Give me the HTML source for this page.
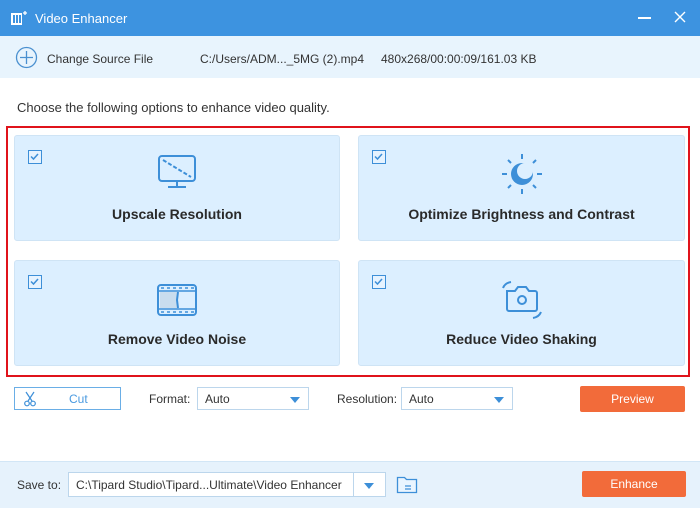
<!DOCTYPE html>
<html><head><meta charset="utf-8"><style>
*{margin:0;padding:0;box-sizing:border-box}
body{width:700px;height:508px;overflow:hidden;background:#fff;font-family:"Liberation Sans","DejaVu Sans",sans-serif;position:relative;color:#333}
.abs{position:absolute}
.title{left:0;top:0;width:700px;height:36px;background:#3d93e0;color:#fff;font-size:13px}
.src{left:0;top:36px;width:700px;height:42px;background:#e8f4fd;font-size:12px;color:#333}
.card{background:#dcefff;border-radius:3px;border:1px solid #cfe4f5}
.card .lbl{position:absolute;left:0;right:0;top:70px;text-align:center;font-weight:bold;font-size:14px;color:#2a2a2a}
.cb{position:absolute;left:13px;top:14px;width:14px;height:14px;border:1.5px solid #3d8fd8;background:#e6f3ff}
.ic{position:absolute;left:50%;top:18px;transform:translateX(-50%)}
.sel{border:1px solid #bcd6ec;background:#fff;height:23px;font-size:12px;padding:4px 7px;color:#333}
.tri{position:absolute;right:8px;top:9px;width:0;height:0;border-left:5px solid transparent;border-right:5px solid transparent;border-top:6px solid #3d8fd8}
.btn{background:#f26b3a;color:#fff;font-size:12px;text-align:center;border-radius:2px}
</style></head><body>
<div class="abs title">
  <svg class="abs" style="left:10px;top:10px" width="18" height="16" viewBox="0 0 18 16"><rect x="1" y="3" width="11" height="12" fill="#fff"/><rect x="3" y="5" width="2" height="8" fill="#3d93e0"/><rect x="6" y="5" width="2" height="8" fill="#3d93e0"/><rect x="9" y="5" width="2" height="8" fill="#3d93e0"/><path d="M15 1v4M13 3h4" stroke="#fff" stroke-width="1.3"/></svg>
  <span class="abs" style="left:35px;top:11px">Video Enhancer</span>
  <div class="abs" style="left:638px;top:17px;width:13px;height:1.5px;background:#fff"></div>
  <svg class="abs" style="left:674px;top:11px" width="12" height="12"><path d="M1 1L11 11M11 1L1 11" stroke="#fff" stroke-width="1.4"/></svg>
</div>
<div class="abs src">
  <svg class="abs" style="left:15px;top:10px" width="23" height="23"><circle cx="11.5" cy="11.5" r="10" fill="none" stroke="#4a90d0" stroke-width="1.3"/><path d="M11.5 5v13M5 11.5h13" stroke="#4a90d0" stroke-width="1.3"/></svg>
  <span class="abs" style="left:47px;top:16px">Change Source File</span>
  <span class="abs" style="left:200px;top:16px">C:/Users/ADM..._5MG (2).mp4</span>
  <span class="abs" style="left:381px;top:16px">480x268/00:00:09/161.03 KB</span>
</div>
<div class="abs" style="left:17px;top:100px;font-size:13px;color:#333">Choose the following options to enhance video quality.</div>
<div class="abs" style="left:6px;top:126px;width:684px;height:251px;border:2px solid #e0131b"></div>

<div class="abs card" style="left:14px;top:135px;width:326px;height:106px">
  <div class="cb"><svg width="11" height="11" style="position:absolute;left:0;top:0"><path d="M2 5.5l2.5 2.5L9 3" stroke="#3d8fd8" stroke-width="1.5" fill="none"/></svg></div>
  <svg class="ic" width="40" height="36" viewBox="0 0 40 36"><rect x="2" y="2" width="36" height="25" rx="3" fill="none" stroke="#3d8fd8" stroke-width="2"/><path d="M6 6L34 23" stroke="#3d8fd8" stroke-width="2" stroke-dasharray="4 2"/><path d="M20 27v5M11 33h18" stroke="#3d8fd8" stroke-width="2"/></svg>
  <div class="lbl">Upscale Resolution</div>
</div>
<div class="abs card" style="left:358px;top:135px;width:327px;height:106px">
  <div class="cb"><svg width="11" height="11" style="position:absolute;left:0;top:0"><path d="M2 5.5l2.5 2.5L9 3" stroke="#3d8fd8" stroke-width="1.5" fill="none"/></svg></div>
  <svg class="ic" width="44" height="44" viewBox="0 0 44 44" style="top:16px"><g stroke="#3d8fd8" stroke-width="2"><path d="M22 2v5M22 37v5M2 22h5M37 22h5M8 8l3 3M33 33l3 3M36 8l-3 3M8 36l3-3"/></g><circle cx="22" cy="22" r="11" fill="#3d8fd8"/><circle cx="25" cy="19" r="8" fill="#dcefff"/></svg>
  <div class="lbl">Optimize Brightness and Contrast</div>
</div>
<div class="abs card" style="left:14px;top:260px;width:326px;height:106px">
  <div class="cb"><svg width="11" height="11" style="position:absolute;left:0;top:0"><path d="M2 5.5l2.5 2.5L9 3" stroke="#3d8fd8" stroke-width="1.5" fill="none"/></svg></div>
  <svg class="ic" width="42" height="34" viewBox="0 0 42 34" style="top:22px"><rect x="2" y="2" width="38" height="30" rx="3" fill="none" stroke="#3d8fd8" stroke-width="2"/><path d="M2 8h38M2 26h38" stroke="#3d8fd8" stroke-width="1.5"/><path d="M5 5h3M11 5h3M17 5h3M23 5h3M29 5h3M35 5h3M5 29h3M11 29h3M17 29h3M23 29h3M29 29h3M35 29h3" stroke="#3d8fd8" stroke-width="1.5"/><rect x="4" y="9" width="18" height="16" fill="#c9ddee"/><path d="M22 9l-1 8 1 8" stroke="#3d8fd8" stroke-width="2" fill="none"/></svg>
  <div class="lbl">Remove Video Noise</div>
</div>
<div class="abs card" style="left:358px;top:260px;width:327px;height:106px">
  <div class="cb"><svg width="11" height="11" style="position:absolute;left:0;top:0"><path d="M2 5.5l2.5 2.5L9 3" stroke="#3d8fd8" stroke-width="1.5" fill="none"/></svg></div>
  <svg class="ic" width="44" height="40" viewBox="0 0 44 40" style="top:18px"><g stroke="#3d8fd8" stroke-width="2" fill="none"><path d="M7 12h8l3-4h8l3 4h6a2 2 0 0 1 2 2v16a2 2 0 0 1-2 2H9a2 2 0 0 1-2-2z"/><circle cx="22" cy="21" r="4"/><path d="M3 9q2-5 8-6M41 33q-2 5-8 6"/></g></svg>
  <div class="lbl">Reduce Video Shaking</div>
</div>

<div class="abs" style="left:14px;top:387px;width:107px;height:23px;border:1px solid #6aaee6;background:#fff">
  <svg class="abs" style="left:8px;top:3px" width="14" height="16"><g stroke="#3d8fd8" stroke-width="1.2" fill="none"><path d="M3 1l6 9M11 1L5 10"/><circle cx="4" cy="12.5" r="2.3"/><circle cx="10" cy="12.5" r="2.3"/></g></svg>
  <span class="abs" style="left:54px;top:4px;font-size:12px;color:#4a9ae0">Cut</span>
</div>
<span class="abs" style="left:149px;top:392px;font-size:12px">Format:</span>
<div class="abs sel" style="left:197px;top:387px;width:112px">Auto<div class="tri"></div></div>
<span class="abs" style="left:337px;top:392px;font-size:12px">Resolution:</span>
<div class="abs sel" style="left:401px;top:387px;width:112px">Auto<div class="tri"></div></div>
<div class="abs btn" style="left:580px;top:386px;width:105px;height:26px;line-height:26px">Preview</div>

<div class="abs" style="left:0;top:461px;width:700px;height:47px;background:#e6f2fc;border-top:1px solid #d2e6f6"></div>
<span class="abs" style="left:17px;top:478px;font-size:12px">Save to:</span>
<div class="abs sel" style="left:68px;top:472px;width:318px;height:25px;padding:5px 7px">C:\Tipard Studio\Tipard...Ultimate\Video Enhancer<div class="abs" style="left:284px;top:0;width:1px;height:23px;background:#bcd6ec"></div><div class="tri" style="right:11px;top:10px"></div></div>
<svg class="abs" style="left:396px;top:474px" width="22" height="20"><path d="M1.5 3.5h7l2 2h10v13h-19z" fill="#eaf5ff" stroke="#3d8fd8" stroke-width="1.3"/><path d="M9 12h6M9 15h6" stroke="#3d8fd8" stroke-width="1.2"/></svg>
<div class="abs btn" style="left:582px;top:471px;width:104px;height:26px;line-height:26px">Enhance</div>
</body></html>
